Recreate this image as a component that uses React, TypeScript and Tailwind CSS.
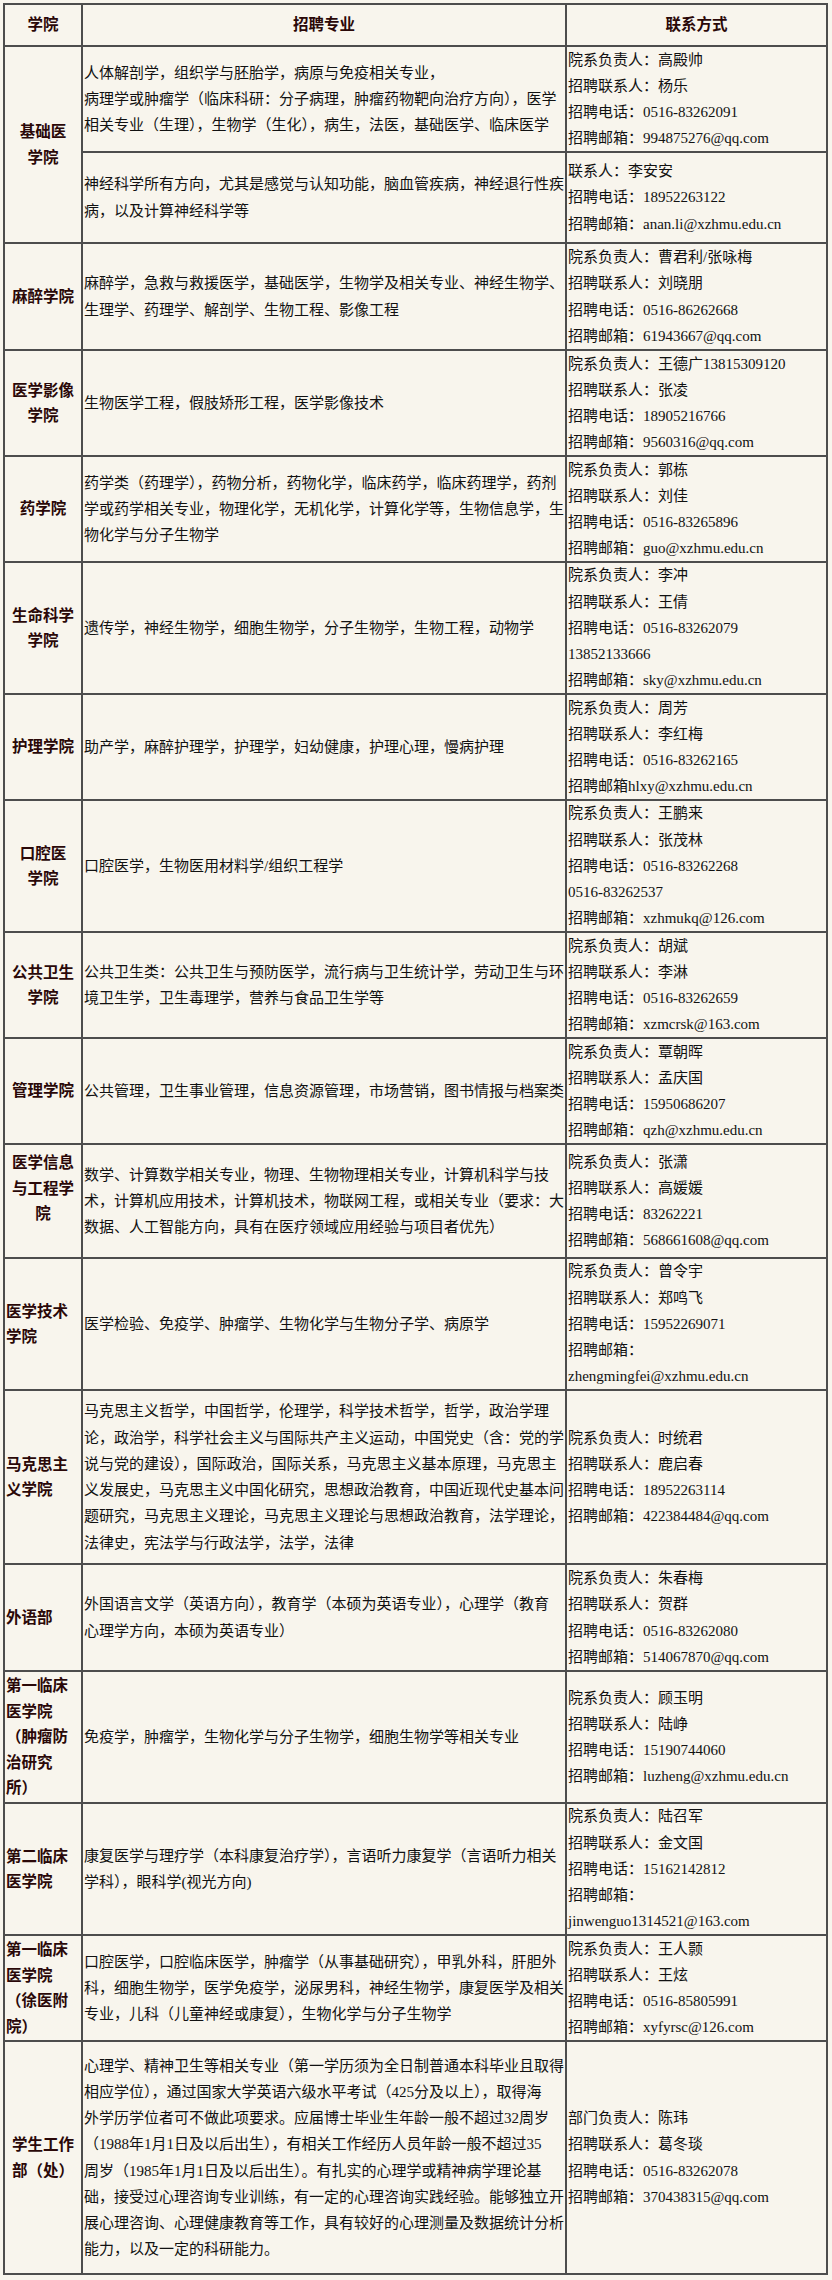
type Row = {
  name: string[];
  left?: boolean;
  h: string;
  major: string[];
  contact: string[];
};

const rows: Row[] = [
  {
    name: ["麻醉学院"],
    h: "h-[105px]",
    major: [
      "麻醉学，急救与救援医学，基础医学，生物学及相关专业、神经生物学、",
      "生理学、药理学、解剖学、生物工程、影像工程",
    ],
    contact: ["院系负责人：曹君利/张咏梅", "招聘联系人：刘晓朋", "招聘电话：0516-86262668", "招聘邮箱：61943667@qq.com"],
  },
  {
    name: ["医学影像", "学院"],
    h: "h-[104px]",
    major: ["生物医学工程，假肢矫形工程，医学影像技术"],
    contact: ["院系负责人：王德广13815309120", "招聘联系人：张凌", "招聘电话：18905216766", "招聘邮箱：9560316@qq.com"],
  },
  {
    name: ["药学院"],
    h: "h-[104px]",
    major: [
      "药学类（药理学），药物分析，药物化学，临床药学，临床药理学，药剂",
      "学或药学相关专业，物理化学，无机化学，计算化学等，生物信息学，生",
      "物化学与分子生物学",
    ],
    contact: ["院系负责人：郭栋", "招聘联系人：刘佳", "招聘电话：0516-83265896", "招聘邮箱：guo@xzhmu.edu.cn"],
  },
  {
    name: ["生命科学", "学院"],
    h: "h-[130px]",
    major: ["遗传学，神经生物学，细胞生物学，分子生物学，生物工程，动物学"],
    contact: ["院系负责人：李冲", "招聘联系人：王倩", "招聘电话：0516-83262079", "13852133666", "招聘邮箱：sky@xzhmu.edu.cn"],
  },
  {
    name: ["护理学院"],
    h: "h-[104px]",
    major: ["助产学，麻醉护理学，护理学，妇幼健康，护理心理，慢病护理"],
    contact: ["院系负责人：周芳", "招聘联系人：李红梅", "招聘电话：0516-83262165", "招聘邮箱hlxy@xzhmu.edu.cn"],
  },
  {
    name: ["口腔医", "学院"],
    h: "h-[130px]",
    major: ["口腔医学，生物医用材料学/组织工程学"],
    contact: ["院系负责人：王鹏来", "招聘联系人：张茂林", "招聘电话：0516-83262268", "0516-83262537", "招聘邮箱：xzhmukq@126.com"],
  },
  {
    name: ["公共卫生", "学院"],
    h: "h-[104px]",
    major: [
      "公共卫生类：公共卫生与预防医学，流行病与卫生统计学，劳动卫生与环",
      "境卫生学，卫生毒理学，营养与食品卫生学等",
    ],
    contact: ["院系负责人：胡斌", "招聘联系人：李淋", "招聘电话：0516-83262659", "招聘邮箱：xzmcrsk@163.com"],
  },
  {
    name: ["管理学院"],
    h: "h-[104px]",
    major: ["公共管理，卫生事业管理，信息资源管理，市场营销，图书情报与档案类"],
    contact: ["院系负责人：覃朝晖", "招聘联系人：孟庆国", "招聘电话：15950686207", "招聘邮箱：qzh@xzhmu.edu.cn"],
  },
  {
    name: ["医学信息", "与工程学", "院", "\u00a0"],
    h: "h-[112px]",
    major: [
      "数学、计算数学相关专业，物理、生物物理相关专业，计算机科学与技",
      "术，计算机应用技术，计算机技术，物联网工程，或相关专业（要求：大",
      "数据、人工智能方向，具有在医疗领域应用经验与项目者优先）",
    ],
    contact: ["院系负责人：张潇", "招聘联系人：高媛媛", "招聘电话：83262221", "招聘邮箱：568661608@qq.com"],
  },
  {
    name: ["医学技术", "学院"],
    left: true,
    h: "h-[130px]",
    major: ["医学检验、免疫学、肿瘤学、生物化学与生物分子学、病原学"],
    contact: ["院系负责人：曾令宇", "招聘联系人：郑鸣飞", "招聘电话：15952269071", "招聘邮箱：", "zhengmingfei@xzhmu.edu.cn"],
  },
  {
    name: ["马克思主", "义学院"],
    left: true,
    h: "h-[172px]",
    major: [
      "马克思主义哲学，中国哲学，伦理学，科学技术哲学，哲学，政治学理",
      "论，政治学，科学社会主义与国际共产主义运动，中国党史（含：党的学",
      "说与党的建设），国际政治，国际关系，马克思主义基本原理，马克思主",
      "义发展史，马克思主义中国化研究，思想政治教育，中国近现代史基本问",
      "题研究，马克思主义理论，马克思主义理论与思想政治教育，法学理论，",
      "法律史，宪法学与行政法学，法学，法律",
    ],
    contact: ["院系负责人：时统君", "招聘联系人：鹿启春", "招聘电话：18952263114", "招聘邮箱：422384484@qq.com"],
  },
  {
    name: ["外语部"],
    left: true,
    h: "h-[105px]",
    major: [
      "外国语言文学（英语方向），教育学（本硕为英语专业），心理学（教育",
      "心理学方向，本硕为英语专业）",
    ],
    contact: ["院系负责人：朱春梅", "招聘联系人：贺群", "招聘电话：0516-83262080", "招聘邮箱：514067870@qq.com"],
  },
  {
    name: ["第一临床", "医学院", "（肿瘤防", "治研究", "所）"],
    left: true,
    h: "h-[130px]",
    major: ["免疫学，肿瘤学，生物化学与分子生物学，细胞生物学等相关专业"],
    contact: ["院系负责人：顾玉明", "招聘联系人：陆峥", "招聘电话：15190744060", "招聘邮箱：luzheng@xzhmu.edu.cn"],
  },
  {
    name: ["第二临床", "医学院"],
    left: true,
    h: "h-[130px]",
    major: [
      "康复医学与理疗学（本科康复治疗学），言语听力康复学（言语听力相关",
      "学科），眼科学(视光方向)",
    ],
    contact: ["院系负责人：陆召军", "招聘联系人：金文国", "招聘电话：15162142812", "招聘邮箱：", "jinwenguo1314521@163.com"],
  },
  {
    name: ["第一临床", "医学院", "（徐医附", "院）"],
    left: true,
    h: "h-[104px]",
    major: [
      "口腔医学，口腔临床医学，肿瘤学（从事基础研究），甲乳外科，肝胆外",
      "科，细胞生物学，医学免疫学，泌尿男科，神经生物学，康复医学及相关",
      "专业，儿科（儿童神经或康复），生物化学与分子生物学",
    ],
    contact: ["院系负责人：王人颢", "招聘联系人：王炫", "招聘电话：0516-85805991", "招聘邮箱：xyfyrsc@126.com"],
  },
  {
    name: ["学生工作", "部（处）"],
    h: "h-[231px]",
    major: [
      "心理学、精神卫生等相关专业（第一学历须为全日制普通本科毕业且取得",
      "相应学位），通过国家大学英语六级水平考试（425分及以上），取得海",
      "外学历学位者可不做此项要求。应届博士毕业生年龄一般不超过32周岁",
      "（1988年1月1日及以后出生），有相关工作经历人员年龄一般不超过35",
      "周岁（1985年1月1日及以后出生）。有扎实的心理学或精神病学理论基",
      "础，接受过心理咨询专业训练，有一定的心理咨询实践经验。能够独立开",
      "展心理咨询、心理健康教育等工作，具有较好的心理测量及数据统计分析",
      "能力，以及一定的科研能力。",
    ],
    contact: ["部门负责人：陈玮", "招聘联系人：葛冬琰", "招聘电话：0516-83262078", "招聘邮箱：370438315@qq.com"],
  },
];

function NameCell({ lines, left }: { lines: string[]; left?: boolean }) {
  return (
    <div
      className={
        "w-[76px] shrink-0 bg-[#f8f5ed] flex flex-col justify-center px-px font-bold text-[15.5px] leading-[25.5px] text-[#2a0808] " +
        (left ? "items-start" : "items-center")
      }
    >
      {lines.map((l, i) => (
        <div key={i} className="whitespace-nowrap">{l}</div>
      ))}
    </div>
  );
}

function Lines({ lines, wide }: { lines: string[]; wide?: boolean }) {
  return (
    <div
      className={
        "bg-[#f8f5ed] flex flex-col justify-center pl-px text-[15px] leading-[26.25px] text-[#111] " +
        (wide ? "w-[482px] shrink-0" : "flex-1 min-w-0")
      }
    >
      {lines.map((l, i) => (
        <div key={i} className="whitespace-nowrap">{l}</div>
      ))}
    </div>
  );
}

export default function App() {
  return (
    <div className="min-h-screen bg-[#f8f5ed] pt-[3px] pl-[3px] font-['Liberation_Serif','Noto_Sans_CJK_SC',serif]">
      <div className="w-[825px] flex flex-col gap-[2px] p-[2px] bg-[#4d4d4d]">
        {/* header */}
        <div className="flex gap-[2px] h-[40px] font-bold text-[15.5px] text-[#2a0808]">
          <div className="w-[76px] shrink-0 bg-[#f8f5ed] flex items-center justify-center">学院</div>
          <div className="w-[482px] shrink-0 bg-[#f8f5ed] flex items-center justify-center">招聘专业</div>
          <div className="flex-1 bg-[#f8f5ed] flex items-center justify-center">联系方式</div>
        </div>

        {/* 基础医学院: two sub rows */}
        <div className="flex gap-[2px] h-[195px]">
          <NameCell lines={["基础医", "学院"]} />
          <div className="flex-1 flex flex-col gap-[2px]">
            <div className="flex gap-[2px] h-[104px]">
              <Lines
                wide
                lines={[
                  "人体解剖学，组织学与胚胎学，病原与免疫相关专业，",
                  "病理学或肿瘤学（临床科研：分子病理，肿瘤药物靶向治疗方向），医学",
                  "相关专业（生理），生物学（生化），病生，法医，基础医学、临床医学",
                ]}
              />
              <Lines lines={["院系负责人：高殿帅", "招聘联系人：杨乐", "招聘电话：0516-83262091", "招聘邮箱：994875276@qq.com"]} />
            </div>
            <div className="flex gap-[2px] h-[89px]">
              <Lines wide lines={["神经科学所有方向，尤其是感觉与认知功能，脑血管疾病，神经退行性疾", "病，以及计算神经科学等"]} />
              <Lines lines={["联系人：李安安", "招聘电话：18952263122", "招聘邮箱：anan.li@xzhmu.edu.cn"]} />
            </div>
          </div>
        </div>

        {rows.map((r, i) => (
          <div key={i} className={"flex gap-[2px] " + r.h}>
            <NameCell lines={r.name} left={r.left} />
            <Lines wide lines={r.major} />
            <Lines lines={r.contact} />
          </div>
        ))}
      </div>
    </div>
  );
}
